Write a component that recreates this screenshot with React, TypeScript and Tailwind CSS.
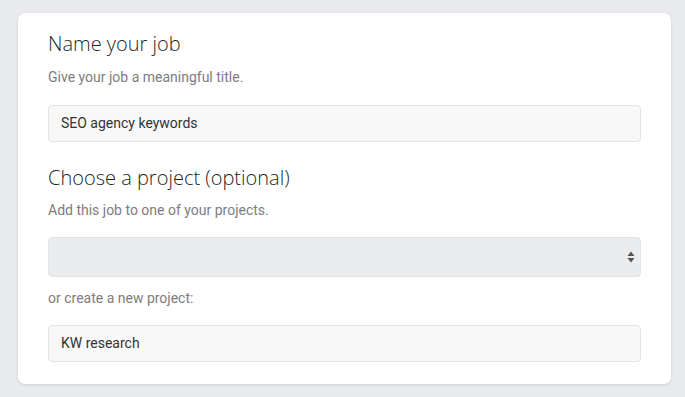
import React from "react";

function Arrows() {
  return (
    <svg width="8" height="12" viewBox="0 0 8 12" className="absolute right-[5px] top-1/2 -translate-y-1/2" fill="#555">
      <path d="M4 0.5 L7.5 5 L0.5 5 Z" />
      <path d="M4 11.5 L7.5 7 L0.5 7 Z" />
    </svg>
  );
}

export default function App() {
  const body = { fontFamily: "Roboto, 'Liberation Sans', sans-serif" };
  const head = { fontFamily: "'Open Sans', 'DejaVu Sans', sans-serif" };
  return (
    <div className="w-[685px] h-[397px] bg-[#e9eaee] pt-[13px] pl-[18px]" style={body}>
      <div className="w-[653px] h-[371px] bg-white rounded-[7px] shadow-[0_1px_3px_rgba(0,0,0,0.12)] px-[30px] pt-[17px]">
        <h2 className="text-[20px] leading-[28px] font-light text-[#1f1f1f]" style={head}>Name your job</h2>
        <p className="mt-[11px] text-[14px] leading-[16px] text-[#7d7d7d]">Give your job a meaningful title.</p>
        <div className="mt-[20px] h-[37px] rounded-[4px] border border-[#e3e3e3] bg-[#f8f8f8] flex items-center px-[12px] text-[14px] text-[#333]">
          SEO agency keywords
        </div>
        <h2 className="mt-[22px] text-[20px] leading-[28px] font-light text-[#1f1f1f]" style={head}>Choose a project (optional)</h2>
        <p className="mt-[10px] text-[14px] leading-[16px] text-[#7d7d7d]">Add this job to one of your projects.</p>
        <div className="relative mt-[19px] h-[40px] rounded-[4px] border border-[#e3e4e7] bg-[#ebecee]">
          <Arrows />
        </div>
        <p className="mt-[13px] text-[14px] leading-[16px] text-[#7d7d7d]">or create a new project:</p>
        <div className="mt-[19px] h-[37px] rounded-[4px] border border-[#e3e3e3] bg-[#f8f8f8] flex items-center px-[12px] text-[14px] text-[#333]">
          KW research
        </div>
      </div>
    </div>
  );
}
